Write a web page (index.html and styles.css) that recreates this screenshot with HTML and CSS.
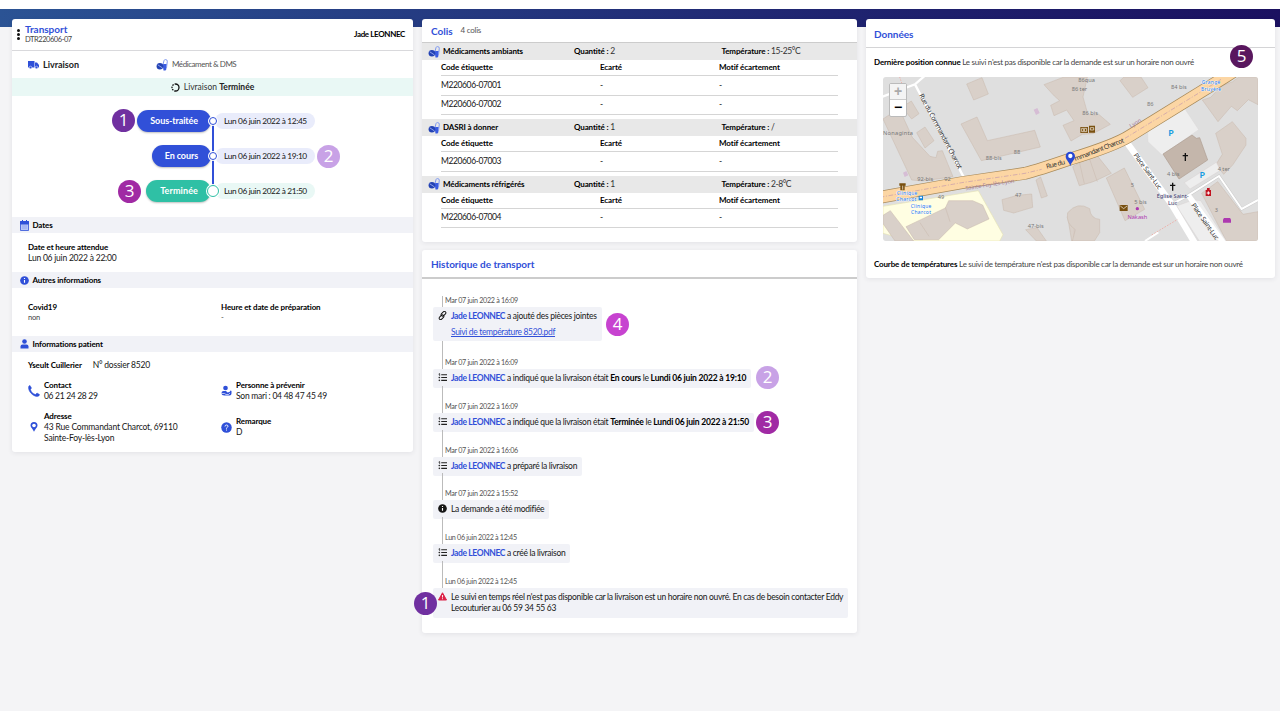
FILE: index.html
```html
<!DOCTYPE html>
<html lang="fr">
<head>
<meta charset="utf-8">
<title>Transport DTR220606-07</title>
<link rel="stylesheet" href="styles.css">
</head>
<body>
<svg class="defs" width="0" height="0" aria-hidden="true">
  <symbol id="pill" viewBox="0 0 12 12">
    <path d="M6.500 5h4.300l-.5 5.200A1.500 1.500 0 0 1 8.900 11.600H7.500z" fill="#3a5be0"/>
    <path d="M7 5.500L8 1.600Q8.300.5 9.600.6 11.400.8 11.300 2.200L10.500 9" fill="none" stroke="#7f98f0" stroke-width="1"/>
    <circle cx="3.900" cy="7.300" r="3.300" fill="#2342b4"/>
    <path d="M1.600 5.700l4.800 3.200" stroke="#a9b9f7" stroke-width=".8"/>
  </symbol>
  <symbol id="tasks" viewBox="0 0 12 12">
    <path d="M4.300 2.200H12M4.300 6H12M4.300 9.800H12" stroke="#222" stroke-width="1.400"/>
    <path d="M.8 1.600L2.200.8v3M.8 6h2M1.800 5v2" fill="none" stroke="#222" stroke-width="1.100"/>
    <circle cx="1.800" cy="9.800" r="1.100" fill="#222"/>
  </symbol>
  <symbol id="info" viewBox="0 0 12 12">
    <circle cx="6" cy="6" r="5.800" fill="currentColor"/>
    <path d="M6 5.200v3.800M6 2.500v1.500" stroke="#fff" stroke-width="1.500"/>
  </symbol>
</svg>
<div class="topbar"></div>
<main class="page">
  <section class="card transport">
    <header class="t-head">
      <span class="dots"><i></i><i></i><i></i></span>
      <div class="t-title"><h1>Transport</h1><p>DTR220606-07</p></div>
      <b class="owner">Jade LEONNEC</b>
    </header>
    <div class="kinds">
      <span class="kind-a"><svg width="11" height="8" viewBox="0 0 22 16"><path d="M0 0h13v13H0zM14 3h4l4 5v5h-8z" fill="#2f50d8"/><circle cx="5" cy="13" r="2.600" fill="#2f50d8" stroke="#fff"/><circle cx="17" cy="13" r="2.600" fill="#2f50d8" stroke="#fff"/></svg><b>Livraison</b></span>
      <span class="kind-b"><svg width="12" height="12"><use href="#pill"/></svg><span>Médicament &amp; DMS</span></span>
    </div>
    <div class="status"><svg width="9" height="9" viewBox="0 0 18 18"><circle cx="9" cy="9" r="7" fill="none" stroke="#111" stroke-width="2.600" stroke-dasharray="24 2 3 2 3 2 3 2" transform="rotate(-90 9 9)"/></svg><span>Livraison <b>Terminée</b></span></div>
    <div class="steps">
      <div class="step"><b class="tag">Sous-traitée</b><i class="dot"></i><span class="when">Lun 06 juin 2022 à 12:45</span></div>
      <div class="step"><b class="tag">En cours</b><i class="dot"></i><span class="when">Lun 06 juin 2022 à 19:10</span></div>
      <div class="step done"><b class="tag">Terminée</b><i class="dot"></i><span class="when">Lun 06 juin 2022 à 21:50</span></div>
    </div>
    <h2 class="band"><svg width="9" height="11" viewBox="0 0 18 22"><path d="M1 3h16v18H1z" fill="#b9c6f5" stroke="#2f50d8" stroke-width="1.600"/><path d="M1 3h16v5H1zM5 0v4M13 0v4" fill="#2f50d8" stroke="#2f50d8" stroke-width="2"/><path d="M4 12h10M4 16h10" stroke="#8a9eee" stroke-width="1.500"/></svg>Dates</h2>
    <div class="dates"><b>Date et heure attendue</b><p>Lun 06 juin 2022 à 22:00</p></div>
    <h2 class="band"><svg class="blue" width="9" height="9"><use href="#info"/></svg>Autres informations</h2>
    <div class="others cols"><div><b>Covid19</b><p class="sm">non</p></div><div><b class="prep">Heure et date de préparation</b><p class="sm">-</p></div></div>
    <h2 class="band"><svg width="9" height="10" viewBox="0 0 18 20"><circle cx="9" cy="5" r="4.600" fill="#2f50d8"/><path d="M1 19v-4q0-4 4-4h8q4 0 4 4v4z" fill="#2f50d8"/></svg>Informations patient</h2>
    <div class="patient"><b>Yseult Cuillerier</b><span>N° dossier 8520</span></div>
    <div class="cols contact">
      <div class="item"><svg width="12" height="12" viewBox="0 0 24 24"><path d="M1 5C1 2 3 1 4 1l3 5-2 3c1 5 5 9 10 10l3-3 5 3c0 2-2 4-5 4C9 22 1 13 1 5z" fill="#2f50d8" stroke="#2f50d8"/></svg><div><b>Contact</b><p>06 21 24 28 29</p></div></div>
      <div class="item"><svg width="11" height="12" viewBox="0 0 22 24"><circle cx="9" cy="6" r="4.700" fill="#2f50d8"/><path d="M1 16q0-4 4-4h5l3 3 4-1 2-3 2 1v5q0 4-4 4H7q-6 0-6-5z" fill="#2f50d8"/><path d="M1 17h6l3 2h5l3-3" fill="none" stroke="#fff" stroke-width="1.300"/></svg><div><b>Personne à prévenir</b><p>Son mari : 04 48 47 45 49</p></div></div>
    </div>
    <div class="cols address">
      <div class="item"><svg class="pin" width="8" height="10" viewBox="0 0 16 20"><path d="M8 19.500C6 14 1 11 1 7a7 7 0 0 1 14 0c0 4-5 7-7 12.500z" fill="#2f50d8"/><circle cx="8" cy="7" r="3.600" fill="#fff"/></svg><div class="addr"><b>Adresse</b><p>43 Rue Commandant Charcot, 69110<br>Sainte-Foy-lès-Lyon</p></div></div>
      <div class="item"><svg width="11" height="11" viewBox="0 0 22 22"><circle cx="11" cy="11" r="10.500" fill="#2f50d8"/><path d="M8 9q0-3 3-3t3 2.500q0 1.500-2 2.500t-1 2.500M11 15v2.200" fill="none" stroke="#fff" stroke-width="1.800"/></svg><div><b>Remarque</b><p>D</p></div></div>
    </div>
  </section>

  <div class="middle">
    <section class="card parcels">
      <header class="p-head"><h1>Colis</h1><span>4 colis</span></header>
      <div class="group">
        <div class="g-head"><svg width="12" height="12"><use href="#pill"/></svg><b class="g-name">Médicaments ambiants</b><span class="g-qty"><b>Quantité :</b> 2</span><span><b>Température :</b> 15-25°C</span></div>
        <div class="tr th"><span>Code étiquette</span><span>Ecarté</span><span>Motif écartement</span></div>
        <div class="tr"><span>M220606-07001</span><span>-</span><span>-</span></div>
        <div class="tr"><span>M220606-07002</span><span>-</span><span>-</span></div>
      </div>
      <div class="group">
        <div class="g-head"><svg width="12" height="12"><use href="#pill"/></svg><b class="g-name">DASRI à donner</b><span class="g-qty"><b>Quantité :</b> 1</span><span><b>Température :</b> /</span></div>
        <div class="tr th"><span>Code étiquette</span><span>Ecarté</span><span>Motif écartement</span></div>
        <div class="tr"><span>M220606-07003</span><span>-</span><span>-</span></div>
      </div>
      <div class="group">
        <div class="g-head"><svg width="12" height="12"><use href="#pill"/></svg><b class="g-name">Médicaments réfrigérés</b><span class="g-qty"><b>Quantité :</b> 1</span><span><b>Température :</b> 2-8°C</span></div>
        <div class="tr th"><span>Code étiquette</span><span>Ecarté</span><span>Motif écartement</span></div>
        <div class="tr"><span>M220606-07004</span><span>-</span><span>-</span></div>
      </div>
    </section>

    <section class="card history">
      <header class="h-head"><h1>Historique de transport</h1></header>
      <div class="log">
        <article class="ev files"><time>Mar 07 juin 2022 à 16:09</time><div class="box"><svg width="9" height="9" viewBox="0 0 18 18"><g fill="none" stroke="#111" stroke-width="1.900"><rect x="8" y="0" width="6" height="11" rx="3" transform="rotate(45 11 5.500)"/><rect x="4" y="7" width="6" height="11" rx="3" transform="rotate(45 7 12.500)"/></g></svg><p><b class="who">Jade LEONNEC</b> a ajouté des pièces jointes<br><a>Suivi de température 8520.pdf</a></p></div></article>
        <article class="ev"><time>Mar 07 juin 2022 à 16:09</time><div class="box"><svg width="9" height="9"><use href="#tasks"/></svg><p><b class="who">Jade LEONNEC</b> a indiqué que la livraison était <b>En cours</b> le <b>Lundi 06 juin 2022 à 19:10</b></p></div></article>
        <article class="ev"><time>Mar 07 juin 2022 à 16:09</time><div class="box"><svg width="9" height="9"><use href="#tasks"/></svg><p><b class="who">Jade LEONNEC</b> a indiqué que la livraison était <b>Terminée</b> le <b>Lundi 06 juin 2022 à 21:50</b></p></div></article>
        <article class="ev"><time>Mar 07 juin 2022 à 16:06</time><div class="box"><svg width="9" height="9"><use href="#tasks"/></svg><p><b class="who">Jade LEONNEC</b> a préparé la livraison</p></div></article>
        <article class="ev"><time>Mar 07 juin 2022 à 15:52</time><div class="box"><svg width="9" height="9"><use href="#info"/></svg><p>La demande a été modifiée</p></div></article>
        <article class="ev"><time>Lun 06 juin 2022 à 12:45</time><div class="box"><svg width="9" height="9"><use href="#tasks"/></svg><p><b class="who">Jade LEONNEC</b> a créé la livraison</p></div></article>
        <article class="ev last"><time>Lun 06 juin 2022 à 12:45</time><div class="box"><svg width="9" height="9" viewBox="0 0 18 18"><path d="M9 1.500L17 16H1z" fill="#dc2348" stroke="#dc2348" stroke-width="2" stroke-linejoin="round"/><path d="M9 6v5M9 12.500v2" stroke="#fff" stroke-width="1.800"/></svg><p>Le suivi en temps réel n'est pas disponible car la livraison est un horaire non ouvré. En cas de besoin contacter Eddy<br>Lecouturier au 06 59 34 55 63</p></div></article>
      </div>
    </section>
  </div>

  <section class="card data">
    <header class="d-head"><h1>Données</h1></header>
    <p class="d-line"><b>Dernière position connue</b> <span class="pos">Le suivi n'est pas disponible car la demande est sur un horaire non ouvré</span></p>
    <div class="map">
      <svg width="375" height="164" viewBox="24 21 1125 492" preserveAspectRatio="none">
        <rect x="24" y="21" width="1125" height="492" fill="#dfdfdf"/>
        <g fill="#d9d0c9" stroke="#c8b9ad" stroke-width="1.500">
          <path d="M275 42L321 23 340 72 296 90zM94 103l15-10 23 38-22 16-18-22zM125 188l25-17 27 41-27 22zM258 162l48-21 31 71 142-31 17 50-90 21-87 20z"/>
          <path d="M24 147l18-12 38-3 32 70 53 57 18 4 5-19 14-2 32 78-90 13-34-3z"/>
          <path d="M483 330l14-9 20 57-18 6zM381 389l46-13 43-4 3 40-57 17-30-8zM452 479l34-6 28 40h-30z"/>
          <path d="M507 44l60-23h70l-13 60 14 50 24 6 7-6 37 32-52 28-32 2-34 20-24-47 33-14-22-32-38 17-10-31 27-14-16-14z"/>
          <path d="M578 440l20-20v93h-8z"/>
        </g>
        <path d="M24 409L310 362 384 494 374 513H110L24 490z" fill="#fffee2" stroke="#e7e4b5" stroke-width="2"/>
        <g fill="#d9d0c9" stroke="#c8b9ad" stroke-width="1.500">
          <path d="M24 436l22-14 70 91H60l-36-52z"/><path d="M93 470l118-56 10-22h72l30 13 19 42-65 30-36-18-50 50H118z"/>
          <path d="M135 458l27 41M211 412l14 43"/>
        </g>
        <g transform="translate(570 0)">
          <g fill="#d9d0c9" stroke="#c8b9ad" stroke-width="1.500">
            <path d="M165 32l12-11h51l21 32-46 29zM412 90l25-8 31-33 35-14 19-14h57v83l-29-15-33 33-18-13-40 46zM452 190l50-35 41 50v20l-40 60-27 28-23-30 19-30z"/>
            <path d="M23 290l20 57 36-10 13-5 47-22-43-54-54 22zM124 324l54-30 61 124-59 34zM8 428q30-35 66-12 2 30 30 32v40l-16 25H22l9-34q-30-20-23-51zM410 370l48-35 76 98 45-8v88h-95z"/>
            <path d="M43 275l15 66M73 265l24 70"/>
          </g>
          <path d="M248 182l110-68 43 65-110 76-42-40z" fill="#eee" stroke="#d8d3d3"/>
          <path d="M358 338l96-61 12 24-91 56zM335 408l49-18 23 2 77 121h-81z" fill="#eee" stroke="#d3cccc"/>
          <path d="M294 252l87-57 13 10 10-2 24 67-86 57z" fill="#c4b6ab" stroke="#ad9d91" stroke-width="2"/>
          <path d="M183 214L318 406 392 525M310 408L370 376 462 318 530 417 579 390" fill="none" stroke="#ccc" stroke-width="9"/>
          <path d="M183 214L318 400 393 525" fill="none" stroke="#fff" stroke-width="19"/>
          <path d="M370 376L480 525" fill="none" stroke="#fff" stroke-width="16"/>
          <path d="M310 408L370 376 462 318 530 417 579 390M240 513l40-26" fill="none" stroke="#fff" stroke-width="6"/>
          <path d="M260 495l78-47" stroke="#f29a90" stroke-width="2" stroke-dasharray="5 4"/>
        </g>
        <path d="M18 82L120 43 152 15M120 43L268 325" fill="none" stroke="#fff" stroke-width="7"/>
        <path d="M74 21l12 36" stroke="#f29a90" stroke-width="2" stroke-dasharray="4 4"/>
        <path d="M14 382L260 338 450 310Q490 300 586 267 720 226 765 197L1050 21 1075 5" fill="none" stroke="#a88b5c" stroke-width="38"/>
        <path d="M14 382L260 338 450 310Q490 300 586 267 720 226 765 197L1050 21 1075 5" fill="none" stroke="#fcd6a4" stroke-width="34"/>
        <path d="M14 382L260 338 450 310 500 298M750 205L1040 27" fill="none" stroke="#c298ad" stroke-width="2" stroke-dasharray="14 5 3 5"/>
        <g class="m-road">
          <text x="132" y="76" transform="rotate(62 132 76)" textLength="252">Rue du Commandant Charcot</text>
          <text x="515" y="296" transform="rotate(-14 515 296)" textLength="58">Rue du</text>
          <text x="601" y="273" transform="rotate(-21 601 273)" textLength="158">mmandant Charcot</text>
          <text x="775" y="256" transform="rotate(54 775 256)" textLength="128">Place Saint-Luc</text>
          <text x="948" y="406" transform="rotate(55 948 406)" textLength="128">Place Saint-Luc</text>
        </g>
        <g class="m-num">
          <text x="24" y="196" textLength="90">Nonaginta</text><text x="127" y="334">92-bis</text><text x="208" y="334">92</text><text x="332" y="269">88-bis</text><text x="416" y="253">88</text><text x="188" y="387">49</text><text x="420" y="380">47</text><text x="458" y="475">47-bis</text>
          <text x="610" y="35">86qua</text><text x="590" y="63">86 ter</text><text x="622" y="136">86 bis</text><text x="816" y="108">86</text><text x="888" y="56">84 bis</text><text x="876" y="318">4 bis</text><text x="1028" y="303">4 ter</text><text x="767" y="350">5</text><text x="778" y="403">5 bis</text><text x="1019" y="425">3</text>
        </g>
        <text class="m-muni" x="272" y="361" transform="rotate(-9 272 361)" textLength="148">Sainte-Foy-lès-Lyon</text>
        <text class="m-muni" x="767" y="174" transform="rotate(-30 767 174)">Lyon</text>
        <g class="m-bus"><text x="96" y="376" textLength="62">Clinique</text><text x="94" y="394" textLength="60">Charcot</text><text x="138" y="414" textLength="62">Clinique</text><text x="138" y="432" textLength="60">Charcot</text><text x="1008" y="42" textLength="56">Grange</text><text x="1008" y="62" textLength="60">Bruyère</text></g>
        <path d="M131 377h13v14h-13z" fill="#1583d8"/><path d="M134 380h7v5h-7z" fill="#fff"/>
        <g class="m-church"><text x="893" y="385">Église Saint-</text><text x="893" y="404">Luc</text></g>
        <text class="m-shop" x="787" y="448">Nakash</text>
        <circle cx="787" cy="416" r="5" fill="#ad39b0"/>
        <path d="M1044 448h24v10h-24zM1046 444h20v5h-20z" fill="#ad39b0"/>
        <g class="m-park"><text x="888" y="197">P</text><text x="982" y="323">P</text></g>
        <path d="M931 249v24M923 257h16M893 338v24M885 346h16" stroke="#111" stroke-width="4"/>
        <path d="M992 360h16v18h-16zM996 354h8v7h-8z" fill="#c2121f"/><path d="M1000 364v10M995 369h10" stroke="#fff" stroke-width="3"/>
        <g fill="#79500f"><path d="M734 405h24v18h-24zM616 171h23v18h-23zM642 167h18v21h-18zM73 340h19v7H73zM76 347h13v14H76z"/></g>
        <path d="M736 408l10 8 10-8M620 175h15v10h-15zM646 173h10v7h-10zM83 347v12" fill="none" stroke="#e5d9c6" stroke-width="2.500"/>
        <circle cx="627" cy="180" r="3" fill="#e5d9c6"/>
        <g fill="#d6bdd5"><path d="M476 119l11-5 7 15-11 6zM84 308l10-5 6 13-11 5z"/></g>
        <path d="M586 288c-4-13-14-18-14-29a14 14 0 0 1 28 0c0 11-10 16-14 29z" fill="#2848d4"/><circle cx="586" cy="258" r="6.500" fill="#fff"/>
      </svg>
      <div class="zoomer"><span class="off">+</span><span>−</span></div>
    </div>
    <p class="d-line curve"><b>Courbe de températures</b> <span class="cur">Le suivi de température n'est pas disponible car la demande est sur un horaire non ouvré</span></p>
  </section>

  <span class="mark m1">1</span><span class="mark m2">2</span><span class="mark m3">3</span>
  <span class="mark m4">4</span><span class="mark m5">2</span><span class="mark m6">3</span><span class="mark m7">1</span><span class="mark m8">5</span>
</main>
</body>
</html>
```
FILE: styles.css
```css
* { box-sizing: border-box; margin: 0; padding: 0; }
body { width: 1280px; height: 720px; padding-top: 9px; overflow: hidden; background: #fff; color: #161616; font: 8.5px/11px Lato, "Open Sans", sans-serif; letter-spacing: -.22px; }
b, h1, h2 { font-weight: 700; color: #000; letter-spacing: -.12px; }
h1 { font-size: 10px; line-height: 12px; color: #3150d8; letter-spacing: -.03px; }
svg { flex: none; display: block; }
.defs { position: absolute; }
.topbar { height: 18px; background: linear-gradient(90deg, #2b5394, #1f2470 65%, #1b1160); }
.page { position: relative; height: 684px; background: #f4f4f6; padding: 0 5px 0 12px; display: flex; align-items: flex-start; gap: 9px; }
.card { background: #fff; border-radius: 3px; box-shadow: 0 1px 5px rgba(40, 40, 70, .09); }
.transport, .middle, .data { margin-top: -8px; position: relative; }

.transport { width: 401px; height: 433px; }
.t-head { height: 32px; border-bottom: 1px solid #d9d9dc; display: flex; align-items: center; padding: 0 8px 0 5px; }
.dots { display: flex; flex-direction: column; gap: 1px; width: 8px; padding-bottom: 1px; }
.dots i { width: 3px; height: 3px; border-radius: 2px; background: #111; }
.t-title { flex: 1; padding-bottom: 2px; }
.t-title p { font-size: 7.5px; line-height: 9px; color: #444; letter-spacing: -.45px; }
.owner { font-size: 8px; letter-spacing: -.36px; }
.kinds { height: 27px; display: flex; align-items: center; padding: 0 16px; }
.kinds > span { display: flex; align-items: center; gap: 4px; }
.kind-a { width: 128px; }
.kind-b { color: #555; font-size: 8px; letter-spacing: -.45px; }
.kinds b { color: #222; font-size: 9px; letter-spacing: 0; }
.status { height: 18px; background: #e9f8f5; display: flex; align-items: center; justify-content: center; gap: 4px; color: #333; letter-spacing: 0; }
.status b { color: #222; letter-spacing: 0; }
.steps { height: 121px; padding-top: 14px; display: flex; flex-direction: column; gap: 13px; }
.step { height: 22px; display: grid; grid-template-columns: 199px 4px 1fr; align-items: center; position: relative; }
.tag { justify-self: end; background: #3150d8; color: #fff; border-radius: 11px; line-height: 22px; padding: 0 13px; font-size: 9px; box-shadow: 0 1px 2px rgba(0, 0, 0, .25); letter-spacing: -.1px; }
.dot { width: 8px; height: 8px; border: 1.5px solid #3150d8; border-radius: 50%; background: #fff; box-shadow: 0 0 0 1px #fff; margin-left: -2px; z-index: 2; }
.step:not(.done)::after { content: ""; position: absolute; left: 200px; top: 15px; width: 2px; height: 28px; background: #3150d8; }
.when { justify-self: start; background: #e9ecfb; border-radius: 8px; line-height: 16px; padding: 0 8px 0 9px; font-size: 8.3px; letter-spacing: -.36px; }
.done .tag { background: #2fc0a5; padding-left: 14px; letter-spacing: .1px; }
.done .when { background: #e9f8f5; }
.done .dot { width: 12px; height: 12px; margin-left: -4px; border-color: #2fc0a5; }
.band { height: 16px; background: #f1f2f7; display: flex; align-items: center; gap: 3.500px; padding-left: 8px; font-size: 8px; line-height: 16px; }
.blue { color: #3150d8; }
.dates { height: 39px; padding: 9px 16px 0; }
.transport .dates b, .cols b, .patient b { font-size: 8px; }
.others { height: 48px; padding-top: 14px; }
.others .sm { font-size: 7.5px; line-height: 10px; color: #444; }
.cols { display: grid; grid-template-columns: 193px 1fr; padding-left: 16px; }
.patient { height: 27px; padding: 8px 16px 0; display: flex; gap: 11px; }
.item { display: flex; align-items: center; gap: 4px; }
.item b { display: block; line-height: 11px; }
.contact { height: 24px; }
.contact p { letter-spacing: -.32px; }
.contact .item + .item p { letter-spacing: -.25px; }
.address { height: 36px; margin-top: 6px; letter-spacing: -.17px; }
.pin { margin: 0 2px; }

.middle { width: 435px; display: flex; flex-direction: column; gap: 8px; }
.parcels { height: 223px; }
.p-head { height: 24px; border-bottom: 1px solid #ccc; display: flex; align-items: center; gap: 8px; padding: 0 9px; }
.p-head span { font-size: 8px; color: #555; letter-spacing: -.25px; }
.group { margin-bottom: 4px; }
.g-head { height: 17px; background: #e8e8e8; display: grid; grid-template-columns: 14px 131px 147.500px 1fr; align-items: center; padding-left: 7px; font-size: 8.5px; color: #333; }
.g-head svg { margin-left: -1px; }
.g-head > span { letter-spacing: -.4px; }
.g-head b { font-size: 8px; letter-spacing: -.12px; }
.tr { margin: 0 19px; height: 19.500px; border-bottom: 1px solid #d5d5d5; display: grid; grid-template-columns: 159px 119px 1fr; align-items: center; letter-spacing: -.4px; }
.th { height: 16px; font-size: 8px; font-weight: 700; color: #000; letter-spacing: -.1px; }
.history { height: 383px; }
.h-head { height: 29px; border-bottom: 2px solid #ccc; padding: 8px 9px 0; }
.log { margin: 17px 9px 0 11px; }
.ev { height: 43.800px; position: relative; }
.ev::before { content: ""; position: absolute; left: 9px; top: -16px; bottom: 0; width: 1px; background: #bbb; }
.ev:first-child::before { top: 0; }
.ev.last::before { bottom: auto; height: 27px; }
.ev time { display: block; height: 11px; padding-left: 12px; font-size: 7.2px; line-height: 10px; color: #555; letter-spacing: -.31px; }
.box { position: relative; display: inline-flex; gap: 4px; padding: 4px 5px; min-height: 19px; background: #f1f2f7; border-radius: 2px; letter-spacing: -.29px; white-space: nowrap; }
.box b { letter-spacing: -.2px; }
.box .who { color: #3150d8; letter-spacing: -.39px; }
.box a { color: #3150d8; text-decoration: underline; letter-spacing: -.34px; }
.files { height: 62px; }
.files p { line-height: 16px; margin-top: -3px; }
.files .box { height: 34px; }
.last .box { letter-spacing: -.3px; width: 415px; }
.last .box p { font-variant-numeric: tabular-nums; }

.data { width: 409px; height: 259px; }
.d-head { height: 29px; border-bottom: 1px solid #d4d4d6; padding: 9px 8px; }
.d-line { padding: 9px 8px 0; color: #444; font-size: 8px; letter-spacing: -.28px; }
.d-line b { font-size: 8px; letter-spacing: -.15px; }
.map { position: relative; width: 375px; height: 164px; margin: 9px 0 0 17px; border-radius: 3px; overflow: hidden; }
.map + .d-line { padding-top: 18px; }
.zoomer { position: absolute; left: 6px; top: 6px; width: 18px; height: 34px; border: 1px solid #bbb; border-radius: 2px; background: #fff; }
.zoomer span { display: block; height: 16px; font: 700 14px/15px "Liberation Sans", sans-serif; text-align: center; color: #000; }
.zoomer .off { color: #aaa; background: #f4f4f4; border-bottom: 1px solid #ccc; }
.map text { font-family: "Noto Sans", sans-serif; letter-spacing: 0; }
.m-road text { font-size: 20px; fill: #333; }
.m-num text { font-size: 17px; fill: #777; }
.m-muni { font-size: 17px; fill: #a47c9c; }
.m-bus text { font-size: 15px; fill: #1673e6; text-anchor: middle; stroke: #fff; stroke-width: 2px; paint-order: stroke; }
.m-church text { font-size: 17px; fill: #35356b; text-anchor: middle; stroke: #eee; stroke-width: 2px; paint-order: stroke; }
.m-shop { font-size: 17px; fill: #ad39b0; text-anchor: middle; }
.m-park text { font-size: 27px; font-weight: 600; fill: #159be0; text-anchor: middle; }

.mark { position: absolute; width: 23px; height: 23px; border-radius: 50%; color: #fff; font: 17px/22px "Open Sans", sans-serif; text-align: center; letter-spacing: 0; z-index: 4; }
.m1 { left: 112px; top: 82px; background: #7030a0; }
.m2 { left: 317px; top: 118px; background: #c8a2e6; }
.m3 { left: 118px; top: 153px; background: #a02aa4; }
.m4 { left: 606px; top: 286px; background: #c743d0; }
.m5 { left: 756px; top: 339px; background: #c8a2e6; }
.m6 { left: 756px; top: 384px; background: #a02aa4; }
.m7 { left: 414px; top: 565px; background: #7030a0; }
.m8 { left: 1230px; top: 18px; background: #59175e; }
```
